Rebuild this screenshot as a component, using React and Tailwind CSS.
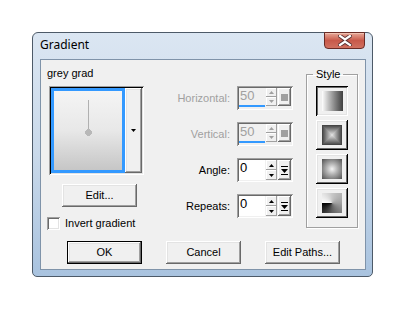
const raised = "shadow-[inset_-1px_-1px_#696969,inset_1px_1px_#ffffff,inset_-2px_-2px_#a0a0a0,inset_2px_2px_#e3e3e3]";

function Btn({ children, def }) {
  return (
    <div className={`w-[75px] h-[23px] flex items-center justify-center bg-[#f0f0f0] text-[11px] text-black ${def ? "border border-black" : ""} ${raised}`}>
      {children}
    </div>
  );
}

function SpinBtn({ up, disabled }) {
  return (
    <div className="w-[11px] flex-1 flex items-center justify-center bg-[#f0f0f0] shadow-[inset_-1px_-1px_#a0a0a0,inset_1px_1px_#ffffff]">
      <svg width="5" height="3" viewBox="0 0 5 3">
        {up ? (
          <path d="M2.5 0 L5 3 L0 3 Z" fill={disabled ? "#a0a0a0" : "#000"} />
        ) : (
          <path d="M0 0 L5 0 L2.5 3 Z" fill={disabled ? "#a0a0a0" : "#000"} />
        )}
      </svg>
    </div>
  );
}

function Spin({ value, disabled }) {
  return (
    <div className="w-[56px] h-[24px] flex p-[2px] shadow-[inset_1px_1px_#a0a0a0,inset_-1px_-1px_#ffffff,inset_2px_2px_#696969]">
      <div className={`w-[27px] h-full flex flex-col ${disabled ? "bg-[#f0f0f0]" : "bg-white"}`}>
        <div className={`text-[13px] leading-[16px] pl-[1px] ${disabled ? "text-[#a0a0a0]" : "text-black"}`}>{value}</div>
        {disabled && <div className="mt-[1px] h-[2px] w-[26px] bg-[#3399ff]" />}
      </div>
      <div className={`flex flex-col ml-[1px] ${disabled ? "h-[18px]" : "h-full"}`}>
        <SpinBtn up disabled={disabled} />
        <SpinBtn disabled={disabled} />
      </div>
      <div className={`w-[13px] ml-[1px] flex items-center justify-center bg-[#f0f0f0] ${disabled ? "h-[18px]" : "h-full"} shadow-[inset_-1px_-1px_#696969,inset_1px_1px_#ffffff,inset_-2px_-2px_#a0a0a0]`}>
        {disabled ? (
          <div className="w-[7px] h-[7px] bg-[#a0a0a0]" />
        ) : (
          <svg width="7" height="9" viewBox="0 0 7 9">
            <rect x="0" y="0" width="7" height="1" fill="#000" />
            <path d="M0 3 L7 3 L3.5 7 Z" fill="#000" />
            <rect x="0" y="8" width="7" height="1" fill="#000" />
          </svg>
        )}
      </div>
    </div>
  );
}

function Row({ label, disabled, value }) {
  return (
    <div className="flex items-center h-[24px]">
      <div className={`w-[80px] text-right text-[11px] ${disabled ? "text-[#a0a0a0]" : "text-black"}`}>{label}</div>
      <div className="ml-[7px]">
        <Spin value={value} disabled={disabled} />
      </div>
    </div>
  );
}

function StyleBtn({ pressed, children }) {
  return (
    <div className={`w-[32px] h-[30px] flex items-center justify-center bg-[#f0f0f0] ${pressed ? "shadow-[inset_1px_1px_#000000,inset_-1px_-1px_#ffffff,inset_2px_2px_#696969,inset_-2px_-2px_#e3e3e3]" : "shadow-[inset_-1px_-1px_#000000,inset_1px_1px_#ffffff,inset_-2px_-2px_#696969,inset_2px_2px_#e3e3e3]"}`}>
      {children}
    </div>
  );
}

function RectGrad() {
  const rects = [];
  const n = 10;
  for (let i = 0; i < n; i++) {
    const v = Math.round(70 + (i / (n - 1)) * 150);
    rects.push(<rect key={i} x={i} y={i} width={20 - i * 2} height={20 - i * 2} fill={`rgb(${v},${v},${v})`} />);
  }
  return <svg width="20" height="20" viewBox="0 0 20 20">{rects}</svg>;
}

export default function App() {
  return (
    <div className="w-[406px] h-[312px] bg-white pt-[32px] pl-[32px] font-['Liberation_Sans',Arial,sans-serif]">
      <div className="w-[341px] h-[245px] border border-[#4d5a68] rounded-t-[6px] rounded-b-[5px] bg-gradient-to-b from-[#dbe6f2] via-[#c9d9ea] to-[#a9c3df] pl-[7px] flex flex-col">
        <div className="h-[26px] flex items-start">
          <div className="flex-1 pt-[5px] text-[12px] font-['Noto_Sans',sans-serif] text-black leading-[14px]">Gradient</div>
          <div className="w-[41px] h-[17px] mr-[7px] -mt-[1px] rounded-b-[4px] border border-[#6a2b25] bg-gradient-to-b from-[#e6a898] via-[#c8594a] to-[#d07060] flex items-center justify-center shadow-[inset_0_1px_#f0c0b0]">
            <svg width="14" height="11" viewBox="0 0 14 11">
              <path d="M2 1 L7 4.5 L12 1 M2 10 L7 6.5 L12 10" stroke="#5b3030" strokeWidth="4" fill="none" strokeLinecap="square" />
              <path d="M2 1 L7 4.5 L12 1 M2 10 L7 6.5 L12 10" stroke="#ffffff" strokeWidth="2.2" fill="none" strokeLinecap="square" />
            </svg>
          </div>
        </div>
        <div className="w-[326px] h-[211px] border border-[#7f93a9] bg-[#f0f0f0] flex flex-col">
          <div className="h-[181px] flex items-start">
            <div className="w-[109px] pl-[6px] flex flex-col">
              <div className="pt-[7px] h-[20px] text-[11px] leading-[13px] text-black">grey grad</div>
              <div className="mt-[6px] ml-[2px] w-[95px] h-[89px] p-[2px] flex shadow-[inset_1px_1px_#a0a0a0,inset_-1px_-1px_#ffffff,inset_2px_2px_#000000,inset_-2px_-2px_#e3e3e3]">
                <div className="w-[74px] h-full border-[3px] border-[#3399ff] bg-gradient-to-b from-[#f4f4f4] via-[#e8e8e8] to-[#c6c6c6] flex justify-center">
                  <svg width="9" height="40" viewBox="0 0 9 40" className="mt-[9px]">
                    <rect x="4" y="0" width="1" height="31" fill="#b0b0b0" />
                    <rect x="2" y="30" width="5" height="5" fill="#b8b8b8" />
                    <rect x="3" y="29" width="3" height="7" fill="#b8b8b8" />
                    <rect x="1" y="31" width="7" height="3" fill="#b8b8b8" />
                  </svg>
                </div>
                <div className={`w-[17px] h-full flex items-center justify-center bg-[#f0f0f0] ${raised}`}>
                  <svg width="5" height="3" viewBox="0 0 5 3"><path d="M0 0 L5 0 L2.5 3 Z" fill="#000" /></svg>
                </div>
              </div>
              <div className="mt-[9px] ml-[15px]"><Btn>Edit...</Btn></div>
              <div className="mt-[10px] flex items-center">
                <div className="w-[13px] h-[13px] bg-white shadow-[inset_1px_1px_#a0a0a0,inset_-1px_-1px_#ffffff,inset_2px_2px_#696969,inset_-2px_-2px_#e3e3e3]" />
                <div className="ml-[5px] text-[11px] text-black leading-[13px]">Invert gradient</div>
              </div>
            </div>
            <div className="w-[144px] pt-[26px] flex flex-col gap-[12px]">
              <Row label="Horizontal:" value="50" disabled />
              <Row label="Vertical:" value="50" disabled />
              <Row label="Angle:" value="0" />
              <Row label="Repeats:" value="0" />
            </div>
            <fieldset className="ml-[12px] mt-[8px] w-[52px] h-[160px] border border-[#a0a0a0] shadow-[1px_1px_#ffffff,inset_1px_1px_#ffffff] flex flex-col items-center px-0 pt-0">
              <legend className="ml-[6px] px-[3px] text-[11px] leading-[13px] text-black">Style</legend>
              <div className="flex flex-col gap-[4px] mt-[5px] items-center">
                <StyleBtn pressed>
                  <div className="w-[21px] h-[20px] bg-gradient-to-r from-[#ffffff] to-[#404040]" />
                </StyleBtn>
                <StyleBtn><RectGrad /></StyleBtn>
                <StyleBtn>
                  <div className="w-[20px] h-[20px] bg-[radial-gradient(circle,#f4f4f4_0%,#b0b0b0_40%,#505050_100%)]" />
                </StyleBtn>
                <StyleBtn>
                  <div className="w-[20px] h-[20px] bg-[conic-gradient(from_270deg,#ffffff,#c8c8c8_25%,#a0a0a0_50%,#606060_75%,#000000)]" />
                </StyleBtn>
              </div>
            </fieldset>
          </div>
          <div className="flex pl-[26px] gap-[24px]">
            <Btn def>OK</Btn>
            <Btn>Cancel</Btn>
            <Btn>Edit Paths...</Btn>
          </div>
        </div>
      </div>
    </div>
  );
}
